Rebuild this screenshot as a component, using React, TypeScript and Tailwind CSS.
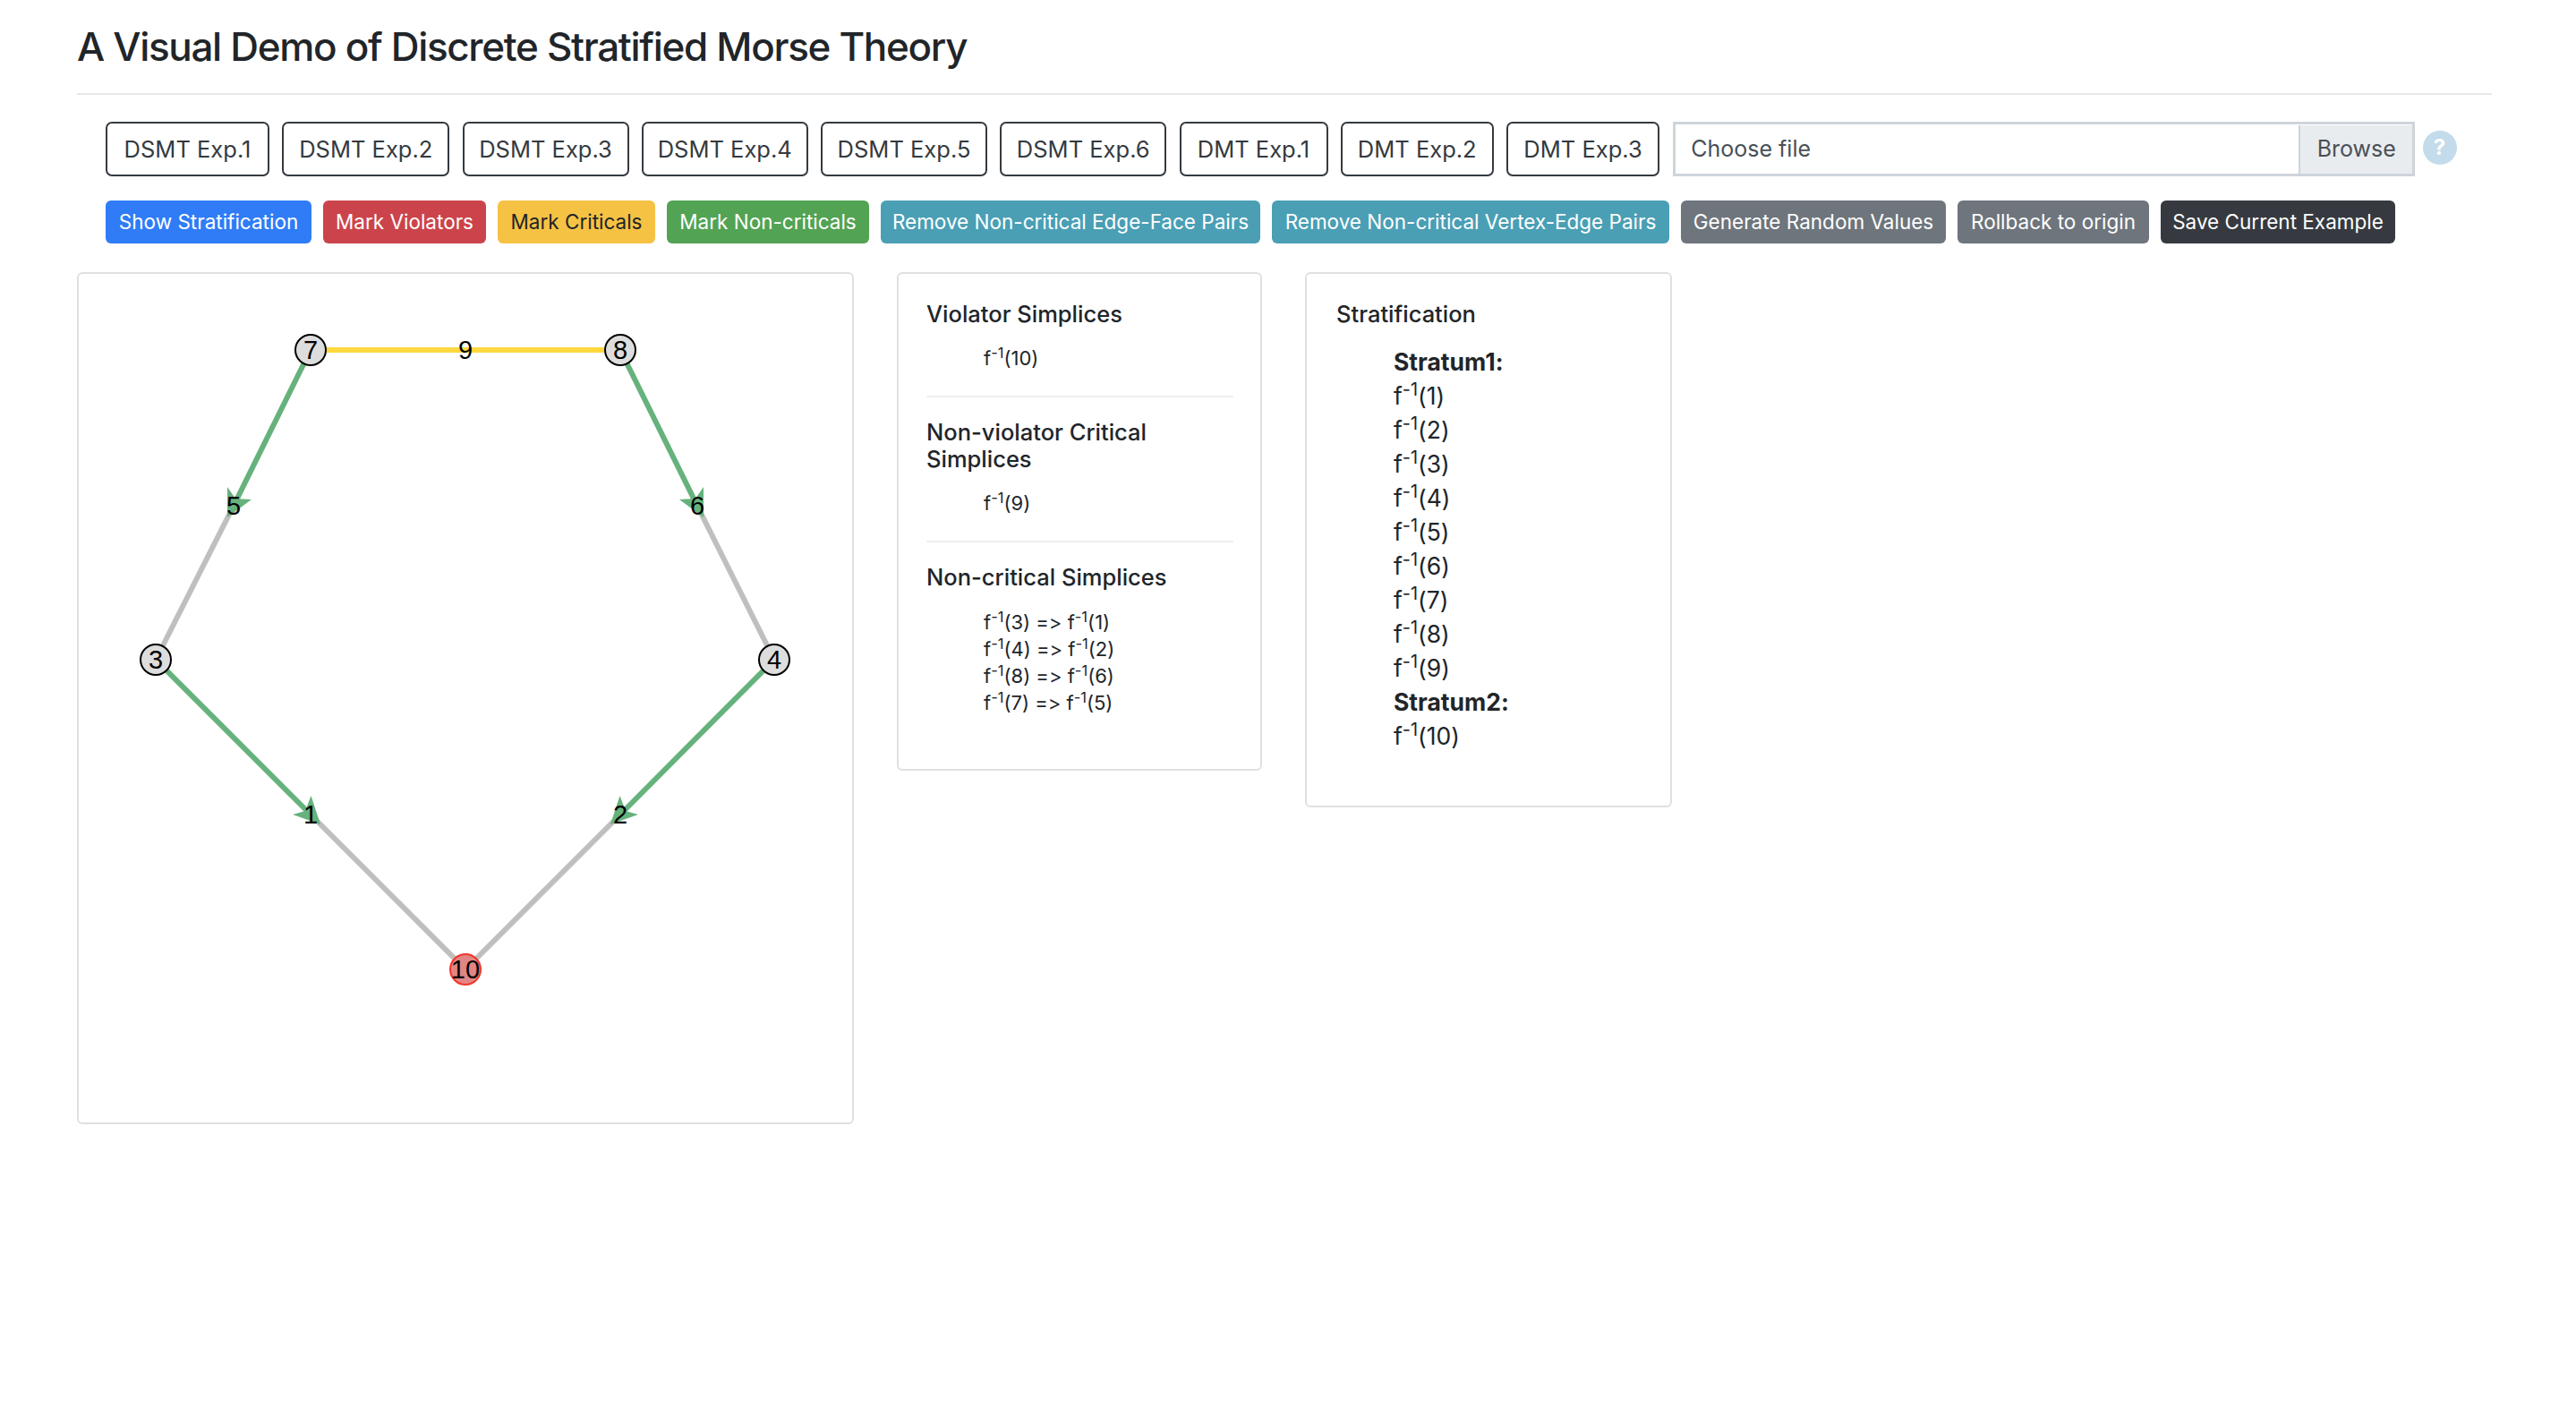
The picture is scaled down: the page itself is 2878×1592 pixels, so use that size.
const examples = [
  { label: "DSMT Exp.1", width: "w-[183px]" },
  { label: "DSMT Exp.2", width: "w-[187px]" },
  { label: "DSMT Exp.3", width: "w-[186px]" },
  { label: "DSMT Exp.4", width: "w-[186px]" },
  { label: "DSMT Exp.5", width: "w-[186px]" },
  { label: "DSMT Exp.6", width: "w-[186px]" },
  { label: "DMT Exp.1", width: "w-[166px]" },
  { label: "DMT Exp.2", width: "w-[171px]" },
  { label: "DMT Exp.3", width: "w-[171px]" },
];

const actions = [
  { label: "Show Stratification", className: "w-[230px] bg-[#2f7cf6] text-white" },
  { label: "Mark Violators", className: "w-[182px] bg-[#cc444b] text-white" },
  { label: "Mark Criticals", className: "w-[176px] bg-[#f6c244] text-[#212529]" },
  { label: "Mark Non-criticals", className: "w-[226px] bg-[#52a353] text-white" },
  { label: "Remove Non-critical Edge-Face Pairs", className: "w-[424px] bg-[#4a9fb5] text-white" },
  { label: "Remove Non-critical Vertex-Edge Pairs", className: "w-[444px] bg-[#4a9fb5] text-white" },
  { label: "Generate Random Values", className: "w-[296px] bg-[#6e757c] text-white" },
  { label: "Rollback to origin", className: "w-[214px] bg-[#6e757c] text-white" },
  { label: "Save Current Example", className: "w-[262px] bg-[#363a40] text-white" },
];

const nodes = [
  { id: 7, x: 347, y: 390 },
  { id: 8, x: 693, y: 390 },
  { id: 3, x: 174, y: 736 },
  { id: 4, x: 865, y: 736 },
];

const edgeLabels = [
  { id: 9, x: 520, y: 390 },
  { id: 5, x: 261, y: 564 },
  { id: 6, x: 779, y: 564 },
  { id: 1, x: 347, y: 909 },
  { id: 2, x: 693, y: 909 },
];

const arrows = [
  "254,543 263,556 281,557 254,577",
  "786,543 777,556 759,557 786,577",
  "347.5,888 341,905 327,909 358,920",
  "692.5,888 699,905 713,909 682,920",
];

function Inverse({ n }: { n: number }) {
  return (
    <>
      f<sup>-1</sup>({n})
    </>
  );
}

function Graph() {
  return (
    <svg viewBox="86 303 868 952" className="block w-[868px] h-[952px]">
      <g strokeWidth="6" fill="none">
        <line x1="347" y1="390" x2="261" y2="564" stroke="#66b27d" />
        <line x1="693" y1="390" x2="779" y2="564" stroke="#66b27d" />
        <line x1="261" y1="564" x2="174" y2="736" stroke="#bfbfbf" />
        <line x1="779" y1="564" x2="865" y2="736" stroke="#bfbfbf" />
        <line x1="174" y1="736" x2="347" y2="909" stroke="#66b27d" />
        <line x1="865" y1="736" x2="693" y2="909" stroke="#66b27d" />
        <line x1="347" y1="909" x2="520" y2="1082" stroke="#bfbfbf" />
        <line x1="693" y1="909" x2="520" y2="1082" stroke="#bfbfbf" />
        <line x1="347" y1="390" x2="693" y2="390" stroke="#ffd83f" />
      </g>
      {arrows.map((points) => (
        <polygon key={points} points={points} fill="#66b27d" />
      ))}
      {nodes.map((node) => (
        <circle key={node.id} cx={node.x} cy={node.y} r="17" fill="#dddddd" stroke="#000" strokeWidth="2" />
      ))}
      <circle cx="520" cy="1082" r="17" fill="#e28585" stroke="#f5352a" strokeWidth="2" />
      <g fontFamily="'Liberation Sans', sans-serif" fontSize="29" textAnchor="middle" fill="#000">
        {nodes.map((node) => (
          <text key={node.id} x={node.x} y={node.y + 10}>
            {node.id}
          </text>
        ))}
        {edgeLabels.map((label) => (
          <text key={label.id} x={label.x} y={label.y + 10}>
            {label.id}
          </text>
        ))}
        <text x="520" y="1092">10</text>
      </g>
    </svg>
  );
}

export default function App() {
  return (
    <div className="min-h-screen bg-white pl-[86px] pr-[94px] text-[#212529] font-['Inter',sans-serif] [font-feature-settings:'calt'_0]">
      <div className="h-[104px] flex items-center">
        <h1 className="text-[44px] leading-[56px] font-medium tracking-[-0.03em]">
          A Visual Demo of Discrete Stratified Morse Theory
        </h1>
      </div>
      <hr className="border-t-2 border-[#e8e8e8]" />

      <div className="pl-[32px] mt-[30px] flex items-center gap-[14.25px]">
        {examples.map((item) => (
          <button
            key={item.label}
            className={`${item.width} h-[61px] shrink-0 rounded-[7px] border-2 border-[#343a40] pt-[1px] text-[25.5px] text-[#343a40]`}
          >
            {item.label}
          </button>
        ))}
        <div className="ml-[1px] w-[829px] h-[61px] flex border-[3px] border-[#ced4da] pt-[1px] text-[25px] text-[#495057]">
          <div className="flex-1 flex items-center pl-[17px]">Choose file</div>
          <div className="w-[127px] flex items-center justify-center bg-[#e9ecef] border-l-2 border-[#ced4da]">Browse</div>
        </div>
        <div className="w-[38px] h-[38px] -mt-[4px] -ml-[6px] rounded-full bg-[#c3dbea] flex items-center justify-center text-white text-[24px] font-bold">
          ?
        </div>
      </div>

      <div className="pl-[32px] mt-[27px] flex gap-[13px]">
        {actions.map((item) => (
          <button key={item.label} className={`${item.className} h-[48px] shrink-0 rounded-[6px] text-[22.5px]`}>
            {item.label}
          </button>
        ))}
      </div>

      <div className="mt-[32px] flex items-start">
        <div className="w-[868px] shrink-0 border-2 border-[#e0e0e0] rounded-[6px] overflow-hidden">
          <div className="-m-[2px]">
            <Graph />
          </div>
        </div>

        <div className="ml-[48px] w-[408px] shrink-0 border-2 border-[#e0e0e0] rounded-[6px] pt-[30px] pb-[59px] pl-[31px] pr-[30px]">
          <h2 className="text-[25.5px] leading-[30px] font-medium">Violator Simplices</h2>
          <div className="mt-[19px] pl-[64px] text-[22px] leading-[30px]">
            <Inverse n={10} />
          </div>
          <hr className="mt-[27px] border-t-2 border-[#eeeeee]" />
          <h2 className="mt-[24px] text-[25.5px] leading-[30px] font-medium">Non-violator Critical Simplices</h2>
          <div className="mt-[19px] pl-[64px] text-[22px] leading-[30px]">
            <Inverse n={9} />
          </div>
          <hr className="mt-[27px] border-t-2 border-[#eeeeee]" />
          <h2 className="mt-[24px] text-[25.5px] leading-[30px] font-medium">Non-critical Simplices</h2>
          <div className="mt-[20px] pl-[64px] text-[22px] leading-[30px]">
            <div>
              <Inverse n={3} /> =&gt; <Inverse n={1} />
            </div>
            <div>
              <Inverse n={4} /> =&gt; <Inverse n={2} />
            </div>
            <div>
              <Inverse n={8} /> =&gt; <Inverse n={6} />
            </div>
            <div>
              <Inverse n={7} /> =&gt; <Inverse n={5} />
            </div>
          </div>
        </div>

        <div className="ml-[48px] w-[410px] shrink-0 border-2 border-[#e0e0e0] rounded-[6px] pt-[30px] pb-[59px] pl-[33px] pr-[32px]">
          <h2 className="text-[25.5px] leading-[30px] font-medium">Stratification</h2>
          <div className="mt-[19px] pl-[64px] text-[26.5px] leading-[38px]">
            <div className="font-bold">Stratum1:</div>
            {[1, 2, 3, 4, 5, 6, 7, 8, 9].map((n) => (
              <div key={n}>
                <Inverse n={n} />
              </div>
            ))}
            <div className="font-bold">Stratum2:</div>
            <div>
              <Inverse n={10} />
            </div>
          </div>
        </div>
      </div>
    </div>
  );
}
